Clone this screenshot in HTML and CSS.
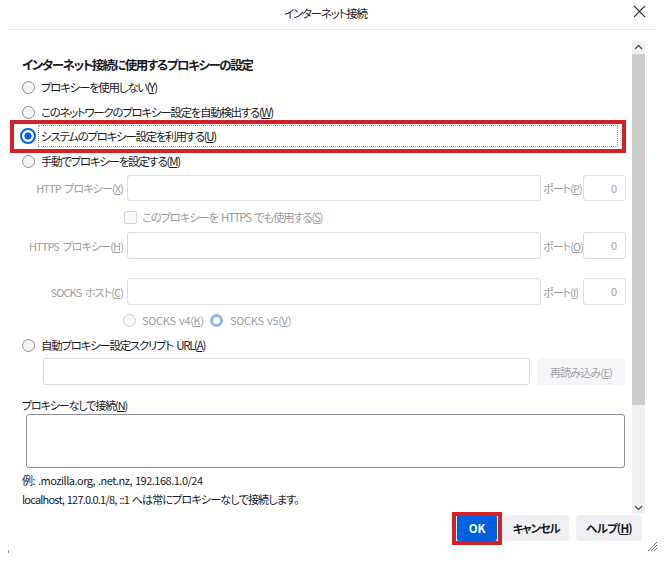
FILE: index.html
```html
<!DOCTYPE html>
<html lang="ja">
<head>
<meta charset="utf-8">
<title>インターネット接続</title>
<link rel="stylesheet" href="styles.css">
</head>
<body>
<div class="dialog">
  <header class="titlebar">
    <span class="title">インターネット接続</span>
    <span class="close"><svg width="13" height="13" viewBox="0 0 13 13"><path d="M1 1 L12 12 M12 1 L1 12" stroke="#333" stroke-width="1.1" fill="none"/></svg></span>
  </header>
  <div class="scroll">
    <div class="main">
      <div class="heading">インターネット接続に使用するプロキシーの設定</div>
      <div class="row radio-row r1"><span class="radio"></span><span>プロキシーを使用しない(<u>Y</u>)</span></div>
      <div class="row radio-row r2"><span class="radio"></span><span>このネットワークのプロキシー設定を自動検出する(<u>W</u>)</span></div>
      <div class="row radio-row r3 highlight"><span class="radio checked"></span><span class="focus">システムのプロキシー設定を利用する(<u>U</u>)</span></div>
      <div class="row radio-row r4"><span class="radio"></span><span>手動でプロキシーを設定する(<u>M</u>)</span></div>
      <div class="field-row f1">
        <span class="flabel">HTTP プロキシー(<u>X</u>)</span><span class="input host"></span>
        <span class="plabel">ポート(<u>P</u>)</span><span class="input port">0</span>
      </div>
      <div class="row check-row"><span class="checkbox"></span><span class="dis">このプロキシーを HTTPS でも使用する(<u>S</u>)</span></div>
      <div class="field-row f2">
        <span class="flabel">HTTPS プロキシー(<u>H</u>)</span><span class="input host"></span>
        <span class="plabel">ポート(<u>O</u>)</span><span class="input port">0</span>
      </div>
      <div class="field-row f3">
        <span class="flabel">SOCKS ホスト(<u>C</u>)</span><span class="input host"></span>
        <span class="plabel">ポート(<u>I</u>)</span><span class="input port">0</span>
      </div>
      <div class="row socks-row">
        <span class="radio dimmed"></span><span class="dis v4">SOCKS v4(<u>K</u>)</span>
        <span class="radio dimchecked"></span><span class="dis latin">SOCKS v5(<u>V</u>)</span>
      </div>
      <div class="row radio-row r5"><span class="radio"></span><span>自動プロキシー設定スクリプト URL(<u>A</u>)</span></div>
      <div class="url-row">
        <span class="input url"></span>
        <span class="reload">再読み込み(<u>E</u>)</span>
      </div>
      <div class="row label-row">プロキシーなしで接続(<u>N</u>)</div>
      <div class="textarea"></div>
      <div class="row note n1">例: .mozilla.org, .net.nz, 192.168.1.0/24</div>
      <div class="row note n2">localhost, 127.0.0.1/8, ::1 へは常にプロキシーなしで接続します。</div>
    </div>
    <div class="scrollbar">
      <span class="sb-arrow"><svg width="9" height="6" viewBox="0 0 9 6"><path d="M1 5 L4.5 1.5 L8 5" stroke="#555" stroke-width="1.3" fill="none"/></svg></span>
      <span class="sb-thumb"></span>
      <span class="sb-track"></span>
      <span class="sb-arrow"><svg width="9" height="6" viewBox="0 0 9 6"><path d="M1 1 L4.5 4.5 L8 1" stroke="#555" stroke-width="1.3" fill="none"/></svg></span>
    </div>
  </div>
  <footer class="buttons">
    <span class="btn ok">OK</span>
    <span class="btn cancel">キャンセル</span>
    <span class="btn help">ヘルプ(<u>H</u>)</span>
  </footer>
  <span class="grip"><svg width="12" height="12" viewBox="0 0 12 12"><path d="M11 2 L2 11 M11 5 L5 11 M11 8 L8 11" stroke="#777" stroke-width="1" fill="none"/></svg></span>
  <span class="mark"></span>
</div>
</body>
</html>
```

FILE: styles.css
```css
* { box-sizing: border-box; }
html, body { margin: 0; padding: 0; background: #fff; }
body {
  width: 665px;
  height: 582px;
  overflow: hidden;
  font-family: "Noto Sans CJK JP", "Noto Sans", sans-serif;
  font-kerning: normal;
  font-feature-settings: "palt";
  font-size: 11.5px;
  letter-spacing: -1.3px;
  word-spacing: 2px;
  color: #1b1b1f;
}
u { text-underline-offset: 1px; }
.dialog { position: relative; width: 665px; height: 582px; }

.titlebar {
  height: 30px;
  margin: 0 8px;
  border-bottom: 1px solid #ececec;
  display: flex;
  align-items: center;
  position: relative;
}
.title { flex: 1; text-align: center; padding-right: 14px; margin-top: -4px; font-size: 11.5px; letter-spacing: -1.2px; }
.close { position: absolute; right: 11px; top: 5px; width: 13px; height: 13px; display: flex; }

.scroll { display: flex; margin-top: 11px; height: 473px; }
.main { width: 632px; display: flex; flex-direction: column; padding-top: 15px; }

.heading { height: 18px; padding-left: 22px; font-weight: bold; font-size: 12.5px; letter-spacing: -1.4px; line-height: 18px; }

.row { display: flex; align-items: center; height: 20px; white-space: nowrap; }
.radio-row { padding-left: 22px; }
.r1 { margin-top: 3px; }
.r2 { margin-top: 5px; }
.r3 { margin-top: 4px; }
.r4 { margin-top: 5px; }
.r5 { margin-top: 5px; }

.radio {
  width: 13px; height: 13px; border-radius: 50%;
  border: 1px solid #8f8f9d; background: #f4f4f6;
  margin-right: 6px; flex: none;
}
.radio.checked {
  width: 16px; height: 16px; margin-left: -2px; margin-right: 2px;
  border: 2.5px solid #0061e0;
  background: radial-gradient(circle, #0061e0 0 3.3px, #fff 3.9px);
}
.radio.dimmed { border-color: #cfcfd6; background: #f8f8fa; }
.radio.dimchecked {
  border: 3px solid #8db4e6; background: #fff; margin-right: 7px;
}

.highlight { position: relative; }
.highlight::after {
  content: ""; position: absolute;
  left: 10px; right: 6px; top: -6px; bottom: -7px;
  border: 4px solid #d42027;
}
.focus {
  flex: none; width: 580px; height: 22px; line-height: 20px;
  border: 1px dotted #9a9a9a; padding-left: 2px;
}

.dis, .flabel, .plabel { color: #9d9da3; }

.field-row { display: flex; align-items: center; height: 26px; white-space: nowrap; }
.f1 { margin-top: 4px; }
.f2 { margin-top: 5px; height: 27px; }
.f3 { margin-top: 19px; height: 27px; }
.flabel { width: 124px; text-align: right; font-size: 11px; letter-spacing: -0.9px; padding-right: 1px; }
.plabel { width: 40px; margin-left: 2px; font-size: 11px; letter-spacing: -0.9px; }
.input {
  height: 100%; border: 1px solid #dedee3; border-radius: 3px; background: #fff;
}
.host { width: 414px; margin-left: 3px; }
.port { width: 43px; text-align: right; padding-right: 8px; line-height: 24px; color: #a3a3a8; font-size: 11px; letter-spacing: 0; }

.check-row { margin-top: 6px; padding-left: 124px; }
.checkbox {
  width: 13px; height: 13px; border: 1px solid #d4d4da; border-radius: 2px;
  background: #f8f8fa; margin-right: 5px; flex: none;
}

.socks-row { margin-top: 5px; padding-left: 123px; }
.v4, .latin { font-size: 11px; letter-spacing: -0.3px; word-spacing: 1px; }
.v4 { width: 68px; }

.url-row { display: flex; height: 27px; margin-top: 3px; padding-left: 43px; }
.url { width: 487px; border-color: #d8d8de; }
.reload {
  width: 88px; margin-left: 7px; background: #f6f6f8; border-radius: 4px;
  color: #a3a3a8; display: flex; align-items: center; justify-content: center; font-size: 11px; letter-spacing: -0.8px;
}

.label-row { margin-top: 12px; height: 16px; padding-left: 22px; font-size: 11px; letter-spacing: -1.1px; }
.textarea {
  margin-top: 1px; margin-left: 26px; width: 599px; height: 54px;
  border: 1px solid #8f8f9d; border-radius: 3px;
}
.note { height: 16px; padding-left: 22px; font-size: 11px; letter-spacing: -0.5px; word-spacing: 1px; }
.n1 { margin-top: 4px; }
.n2 { margin-top: 3px; letter-spacing: -0.8px; }

.scrollbar { width: 13px; display: flex; flex-direction: column; background: #f0f0f0; }
.sb-arrow { height: 12px; display: flex; align-items: center; justify-content: center; flex: none; }
.sb-thumb { height: 351px; background: #cdcdcd; flex: none; margin-top: 1px; }
.sb-track { flex: 1; }

.buttons { display: flex; padding-left: 457px; height: 26px; margin-top: 1px; }
.btn {
  height: 26px; width: 66px; margin-left: 6px; border-radius: 4px;
  background: #f0f0f4; display: flex; align-items: center; justify-content: center;
  font-size: 11.5px; font-weight: bold; color: #1b1b1f; letter-spacing: -1.3px;
}
.btn.ok {
  width: 40px; margin-left: 0; background: #0061e0; color: #fff; position: relative; border-radius: 2px; letter-spacing: 0;
}
.btn.ok::after {
  content: ""; position: absolute; left: -5px; right: -5px; top: -3px; bottom: -4px;
  border: 4px solid #d42027;
}
.btn.help { margin-left: 7px; letter-spacing: -0.8px; }

.grip { position: absolute; left: 646px; top: 540px; width: 12px; height: 12px; display: flex; }
.mark { position: absolute; left: 8px; top: 550px; width: 1px; height: 3px; background: #999; }
```
